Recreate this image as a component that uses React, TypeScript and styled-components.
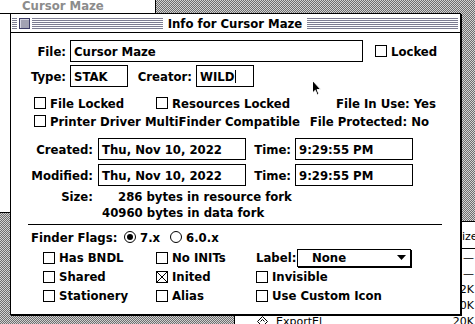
import styled, { createGlobalStyle } from 'styled-components';

const chicago = `'DejaVu Sans Condensed', 'DejaVu Sans', sans-serif`;

const GlobalStyle = createGlobalStyle`
  html, body {
    margin: 0;
    padding: 0;
  }
  body {
    width: 475px;
    height: 324px;
    overflow: hidden;
  }
`;

const Desktop = styled.div`
  position: relative;
  width: 475px;
  height: 324px;
  overflow: hidden;
  background-color: #a3a3a3;
  background-image: repeating-conic-gradient(#6e6e6e 0 25%, #d2d2d2 0 50%);
  background-size: 2px 2px;
  font-family: ${chicago};
  font-size: 13px;
  font-weight: 700;
  color: #000;
`;

/* windows on the desktop */
const Window = styled.div<{ $x: number; $y: number; $w: number; $h: number }>`
  position: absolute;
  left: ${(p) => p.$x}px;
  top: ${(p) => p.$y}px;
  width: ${(p) => p.$w}px;
  height: ${(p) => p.$h}px;
  box-sizing: border-box;
  background: #fff;
  border: 1px solid #000;
  display: flex;
  flex-direction: column;
`;

const InactiveTitle = styled.div`
  height: 15px;
  border-bottom: 1px solid #000;
  display: flex;
  align-items: center;
  padding-left: 22px;
  color: #8c8c8c;
  white-space: nowrap;
`;

const ListHeader = styled.div`
  height: 27px;
  border-bottom: 1px solid #000;
  display: flex;
  align-items: flex-end;
  padding: 0 0 5px 220px;
  box-sizing: border-box;
  font-family: 'DejaVu Sans', sans-serif;
  font-size: 11px;
  font-weight: 400;
`;

const ListRow = styled.div`
  height: 16px;
  display: flex;
  align-items: center;
  font-family: 'DejaVu Sans', sans-serif;
  font-size: 11px;
  font-weight: 400;
`;

const ListName = styled.div`
  flex: 1;
  display: flex;
  align-items: center;
  gap: 8px;
  padding-left: 22px;
`;

const ListSize = styled.div`
  width: 40px;
  margin-right: 19px;
  text-align: right;
`;

/* the Get Info dialog */
const Dialog = styled(Window)`
  box-shadow: 1px 1px 0 #000;
`;

const TitleBar = styled.div`
  height: 18px;
  border-bottom: 1px solid #000;
  display: flex;
  align-items: center;
  padding: 0 2px 0 1px;
`;

const Stripes = styled.div`
  flex: 1;
  height: 11px;
  display: flex;
  background: repeating-linear-gradient(to bottom, #7d7d92 0 1px, #fff 1px 2px);
`;

const CloseGap = styled.div`
  margin-left: 5px;
  padding: 0 2px;
  background: #fff;
`;

const CloseBox = styled.div`
  width: 11px;
  height: 11px;
  box-sizing: border-box;
  border: 1px solid #3c3c66;
  background: #a2a2b2;
  box-shadow: inset 1px 1px 0 #d6d6e2;
`;

const Title = styled.div`
  padding: 0 5px;
  white-space: nowrap;
`;

const Body = styled.div`
  display: flex;
  flex-direction: column;
  padding-top: 7px;
`;

const Row = styled.div<{ $mt?: number; $h?: number; $pl?: number }>`
  display: flex;
  align-items: center;
  height: ${(p) => p.$h ?? 22}px;
  margin-top: ${(p) => p.$mt ?? 0}px;
  padding-left: ${(p) => p.$pl ?? 0}px;
  white-space: nowrap;
`;

const Label = styled.div<{ $w: number }>`
  width: ${(p) => p.$w}px;
  flex-shrink: 0;
  text-align: right;
`;

const Field = styled.div<{ $w: number; $ml: number }>`
  width: ${(p) => p.$w}px;
  margin-left: ${(p) => p.$ml}px;
  height: 22px;
  box-sizing: border-box;
  border: 1px solid #000;
  padding: 0 3px;
  display: flex;
  align-items: center;
  flex-shrink: 0;
`;

const Caret = styled.span`
  width: 1px;
  height: 13px;
  margin-left: 1px;
  background: #000;
`;

const CheckItem = styled.div<{ $w?: number; $ml?: number }>`
  display: flex;
  align-items: center;
  gap: 4px;
  width: ${(p) => (p.$w ? `${p.$w}px` : 'auto')};
  margin-left: ${(p) => p.$ml ?? 0}px;
  flex-shrink: 0;
  white-space: nowrap;
`;

const Box = styled.span`
  width: 12px;
  height: 12px;
  box-sizing: border-box;
  border: 1px solid #000;
  background: #fff;
  display: flex;
  flex-shrink: 0;
`;

const Radio = styled.span<{ $on?: boolean }>`
  width: 12px;
  height: 12px;
  box-sizing: border-box;
  border: 1px solid #000;
  border-radius: 50%;
  display: flex;
  align-items: center;
  justify-content: center;
  flex-shrink: 0;
  &::after {
    content: '';
    width: 6px;
    height: 6px;
    border-radius: 50%;
    background: ${(p) => (p.$on ? '#000' : 'transparent')};
  }
`;

const Info = styled.div<{ $mr: number }>`
  margin-left: auto;
  margin-right: ${(p) => p.$mr}px;
`;

const SizeText = styled.div<{ $ml: number }>`
  margin-left: ${(p) => p.$ml}px;
`;

const Rule = styled.div`
  margin: 4px 0 0 17px;
  width: 414px;
  height: 1px;
  background: #000;
`;

const FlagsLabel = styled.div`
  width: 93px;
`;

const FlagGrid = styled.div`
  margin-top: 2px;
  padding-left: 32px;
  display: grid;
  grid-template-columns: 113px 100px 1fr;
  grid-auto-rows: 19px;
  align-items: center;
  white-space: nowrap;
`;

const LabelCell = styled.div`
  display: flex;
  align-items: center;
`;

const PopupLabel = styled.div`
  width: 41px;
`;

const Popup = styled.div`
  width: 114px;
  height: 18px;
  box-sizing: border-box;
  border: 1px solid #000;
  box-shadow: 1px 1px 0 #000;
  display: flex;
  align-items: center;
  padding: 0 4px 0 14px;
`;

const Arrow = styled.svg`
  margin-left: auto;
`;

const Pointer = styled.svg`
  position: absolute;
  left: 311px;
  top: 79px;
`;

function Check({ label, w, ml, checked }: { label: string; w?: number; ml?: number; checked?: boolean }) {
  return (
    <CheckItem $w={w} $ml={ml}>
      <Box>
        {checked && (
          <svg width="10" height="10" viewBox="0 0 10 10">
            <path d="M0 0 L10 10 M10 0 L0 10" stroke="#000" strokeWidth="1" />
          </svg>
        )}
      </Box>
      {label}
    </CheckItem>
  );
}

export default function App() {
  const sizes = ['—', '—', '2K', '0K', '20K'];
  return (
    <Desktop>
      <GlobalStyle />

      <Window $x={-1} $y={-3} $w={157} $h={216}>
        <InactiveTitle>Cursor Maze</InactiveTitle>
      </Window>

      <Window $x={234} $y={221} $w={260} $h={120}>
        <ListHeader>Size</ListHeader>
        {sizes.map((s, i) => (
          <ListRow key={i}>
            <ListName>
              {i === sizes.length - 1 && (
                <>
                  <svg width="11" height="11" viewBox="0 0 11 11">
                    <path d="M5.5 0.5 L10.5 5.5 L5.5 10.5 L0.5 5.5 Z" fill="#fff" stroke="#000" />
                    <path d="M3.5 5.5 L5.5 3.5 L7.5 5.5" fill="none" stroke="#000" />
                  </svg>
                  ExportEl
                </>
              )}
            </ListName>
            <ListSize>{s}</ListSize>
          </ListRow>
        ))}
      </Window>

      <Dialog $x={10} $y={13} $w={451} $h={302}>
        <TitleBar>
          <Stripes>
            <CloseGap>
              <CloseBox />
            </CloseGap>
          </Stripes>
          <Title>Info for Cursor Maze</Title>
          <Stripes />
        </TitleBar>

        <Body>
          <Row>
            <Label $w={55}>File:</Label>
            <Field $w={293} $ml={4}>Cursor Maze</Field>
            <Check label="Locked" ml={12} />
          </Row>

          <Row $mt={3}>
            <Label $w={55}>Type:</Label>
            <Field $w={58} $ml={4}>STAK</Field>
            <Label $w={64}>Creator:</Label>
            <Field $w={58} $ml={4}>
              WILD
              <Caret />
            </Field>
          </Row>

          <Row $mt={7} $h={18} $pl={23}>
            <Check label="File Locked" w={122} />
            <Check label="Resources Locked" />
            <Info $mr={24}>File In Use: Yes</Info>
          </Row>
          <Row $h={18} $pl={23}>
            <Check label="Printer Driver MultiFinder Compatible" />
            <Info $mr={31}>File Protected: No</Info>
          </Row>

          <Row $mt={8}>
            <Label $w={82}>Created:</Label>
            <Field $w={148} $ml={5}>Thu, Nov 10, 2022</Field>
            <Label $w={45}>Time:</Label>
            <Field $w={118} $ml={4}>9:29:55 PM</Field>
          </Row>
          <Row $mt={4}>
            <Label $w={82}>Modified:</Label>
            <Field $w={148} $ml={5}>Thu, Nov 10, 2022</Field>
            <Label $w={45}>Time:</Label>
            <Field $w={118} $ml={4}>9:29:55 PM</Field>
          </Row>

          <Row $mt={2} $h={16}>
            <Label $w={82}>Size:</Label>
            <SizeText $ml={25}>286 bytes in resource fork</SizeText>
          </Row>
          <Row $h={16}>
            <Label $w={82} />
            <SizeText $ml={9}>40960 bytes in data fork</SizeText>
          </Row>

          <Rule />

          <Row $mt={3} $h={18} $pl={20}>
            <FlagsLabel>Finder Flags:</FlagsLabel>
            <CheckItem $w={46}>
              <Radio $on />
              7.x
            </CheckItem>
            <CheckItem>
              <Radio />
              6.0.x
            </CheckItem>
          </Row>

          <FlagGrid>
            <Check label="Has BNDL" />
            <Check label="No INITs" />
            <LabelCell>
              <PopupLabel>Label:</PopupLabel>
              <Popup>
                None
                <Arrow width="9" height="5" viewBox="0 0 9 5">
                  <path d="M0 0 H9 L4.5 5 Z" fill="#000" />
                </Arrow>
              </Popup>
            </LabelCell>
            <Check label="Shared" />
            <Check label="Inited" checked />
            <Check label="Invisible" />
            <Check label="Stationery" />
            <Check label="Alias" />
            <Check label="Use Custom Icon" />
          </FlagGrid>
        </Body>
      </Dialog>

      <Pointer width="11" height="18" viewBox="0 0 11 18">
        <path
          d="M1.5 1.5 L1.5 14 L4.3 11.3 L6.3 16 L8 15.3 L6 10.6 L9.8 10.6 Z"
          fill="#000"
          stroke="#fff"
          strokeWidth="1"
        />
      </Pointer>
    </Desktop>
  );
}
